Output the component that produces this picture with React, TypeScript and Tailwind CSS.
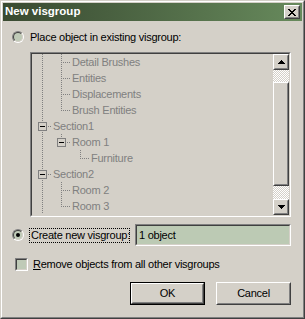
import React from 'react';

// Ecken der "klassischen" 3D-Rahmen
const raised =
  'border border-t-white border-l-white border-r-[#404040] border-b-[#404040]';
const raisedInner =
  'border border-t-[#d4d0c8] border-l-[#d4d0c8] border-r-[#808080] border-b-[#808080]';

type Cell = 'blank' | 'line' | 'tee' | 'ell' | 'teeBox' | 'ellBox';

const rows: { cells: Cell[]; label: string }[] = [
  { cells: ['line', 'tee'], label: 'Detail Brushes' },
  { cells: ['line', 'tee'], label: 'Entities' },
  { cells: ['line', 'tee'], label: 'Displacements' },
  { cells: ['line', 'ell'], label: 'Brush Entities' },
  { cells: ['teeBox'], label: 'Section1' },
  { cells: ['line', 'ellBox'], label: 'Room 1' },
  { cells: ['line', 'blank', 'ell'], label: 'Furniture' },
  { cells: ['teeBox'], label: 'Section2' },
  { cells: ['line', 'tee'], label: 'Room 2' },
  { cells: ['line', 'ell'], label: 'Room 3' },
];

const Connector = ({ kind }: { kind: Cell }) => {
  const full = kind === 'line' || kind === 'tee' || kind === 'teeBox';
  const half = kind === 'ell' || kind === 'ellBox';
  const horiz = kind !== 'blank' && kind !== 'line';
  const box = kind === 'teeBox' || kind === 'ellBox';
  return (
    <svg width="19" height="16" className="shrink-0" shapeRendering="crispEdges">
      {full && <line x1="9.5" y1="0" x2="9.5" y2="16" stroke="#808080" strokeDasharray="1 1" />}
      {half && <line x1="9.5" y1="0" x2="9.5" y2="9" stroke="#808080" strokeDasharray="1 1" />}
      {horiz && <line x1="11" y1="8.5" x2="18" y2="8.5" stroke="#808080" strokeDasharray="1 1" />}
      {box && (
        <>
          <rect x="5.5" y="4.5" width="8" height="8" fill="#d4d0c8" stroke="#808080" />
          <line x1="7" y1="8.5" x2="12" y2="8.5" stroke="#000000" />
        </>
      )}
    </svg>
  );
};

const Arrow = ({ up }: { up?: boolean }) => (
  <div className={`${raised} w-[16px] h-[16px] shrink-0`}>
    <div className={`${raisedInner} w-full h-full flex items-center justify-center bg-[#d4d0c8]`}>
      <svg width="7" height="4" shapeRendering="crispEdges">
        <polygon points={up ? '3.5,0 7,4 0,4' : '0,0 7,0 3.5,4'} fill="#000000" />
      </svg>
    </div>
  </div>
);

const Radio = ({ checked }: { checked?: boolean }) => (
  <div className="w-[12px] h-[12px] rounded-full border border-t-[#808080] border-l-[#808080] border-r-white border-b-white shrink-0">
    <div className="w-full h-full rounded-full border border-t-[#404040] border-l-[#404040] border-r-[#d4d0c8] border-b-[#d4d0c8] bg-[#bfcab7] flex items-center justify-center">
      {checked && <div className="w-[4px] h-[4px] rounded-full bg-black" />}
    </div>
  </div>
);

export default function App() {
  return (
    <div className="w-[305px] h-[319px] font-['Liberation_Sans',Arial,sans-serif] text-[11px] leading-none text-black select-none">
      <div className="w-full h-full border border-t-[#d4d0c8] border-l-[#d4d0c8] border-r-[#404040] border-b-[#404040]">
        <div className="w-full h-full border border-t-white border-l-white border-r-[#808080] border-b-[#808080] bg-[#d4d0c8] p-px flex flex-col">
          {/* Titelleiste */}
          <div className="h-[18px] bg-linear-to-r from-[#394a31] to-[#678a5c] flex items-center justify-between pl-[2px] pr-[2px]">
            <span className="text-white font-bold text-[11.5px]">New visgroup</span>
            <div className={`${raised} w-[16px] h-[14px]`}>
              <div className={`${raisedInner} w-full h-full bg-[#d4d0c8] flex items-center justify-center`}>
                <svg width="8" height="7" shapeRendering="crispEdges">
                  <path d="M0 0h2l2 2.5L6 0h2L5 3.5 8 7H6L4 4.5 2 7H0l3-3.5z" fill="#000000" />
                </svg>
              </div>
            </div>
          </div>

          <div className="flex flex-col tracking-[-0.25px]">
            {/* Option 1 */}
            <div className="mt-[10px] h-[12px] flex items-center pl-[9px]">
              <Radio />
              <span className="ml-[6px]">Place object in existing visgroup:</span>
            </div>

            {/* Baum */}
            <div className="mt-[9px] ml-[27px] w-[261px] h-[165px] border border-t-[#808080] border-l-[#808080] border-r-white border-b-white">
              <div className="w-full h-full border border-t-[#404040] border-l-[#404040] border-r-[#d4d0c8] border-b-[#d4d0c8] flex">
                <div className="flex-1 overflow-hidden pl-[1px] text-[#808080]">
                  {rows.map((r) => (
                    <div key={r.label} className="h-[16px] flex items-center">
                      {r.cells.map((c, i) => (
                        <Connector key={i} kind={c} />
                      ))}
                      <span className="pl-[1px] whitespace-nowrap">{r.label}</span>
                    </div>
                  ))}
                </div>
                <div className="w-[16px] flex flex-col">
                  <Arrow up />
                  <div className="h-[12px] bg-[repeating-conic-gradient(#ffffff_0_25%,#d4d0c8_0_50%)] bg-[length:2px_2px]" />
                  <div className={`${raised} flex-1`}>
                    <div className={`${raisedInner} w-full h-full bg-[#d4d0c8]`} />
                  </div>
                  <div className="h-[13px] bg-[repeating-conic-gradient(#ffffff_0_25%,#d4d0c8_0_50%)] bg-[length:2px_2px]" />
                  <Arrow />
                </div>
              </div>
            </div>

            {/* Option 2 */}
            <div className="mt-[7px] h-[22px] flex items-center pl-[9px]">
              <Radio checked />
              <span className="ml-[5px] w-[101px] h-[15px] px-[1px] flex items-center border border-dotted border-black whitespace-nowrap">
                Create new visgroup:
              </span>
              <div className="ml-[5px] w-[156px] h-[22px] border border-t-[#808080] border-l-[#808080] border-r-white border-b-white">
                <div className="w-full h-full border border-t-[#404040] border-l-[#404040] border-r-[#d4d0c8] border-b-[#d4d0c8] bg-[#bccab4] flex items-center pl-[2px]">
                  1 object
                </div>
              </div>
            </div>

            {/* Checkbox */}
            <div className="mt-[12px] h-[13px] flex items-center pl-[12px]">
              <div className="w-[13px] h-[13px] border border-t-[#808080] border-l-[#808080] border-r-white border-b-white">
                <div className="w-full h-full border border-t-[#404040] border-l-[#404040] border-r-[#d4d0c8] border-b-[#d4d0c8] bg-[#bfcab7]" />
              </div>
              <span className="ml-[5px]">
                <span className="underline">R</span>emove objects from all other visgroups
              </span>
            </div>

            {/* Schaltflächen */}
            <div className="mt-[11px] flex justify-end gap-[11px] pr-[11px]">
              <div className="w-[75px] h-[23px] border border-black">
                <div className={`${raised} w-full h-full`}>
                  <div className={`${raisedInner} w-full h-full flex items-center justify-center`}>OK</div>
                </div>
              </div>
              <div className={`${raised} w-[75px] h-[23px]`}>
                <div className={`${raisedInner} w-full h-full flex items-center justify-center`}>Cancel</div>
              </div>
            </div>
          </div>
        </div>
      </div>
    </div>
  );
}
